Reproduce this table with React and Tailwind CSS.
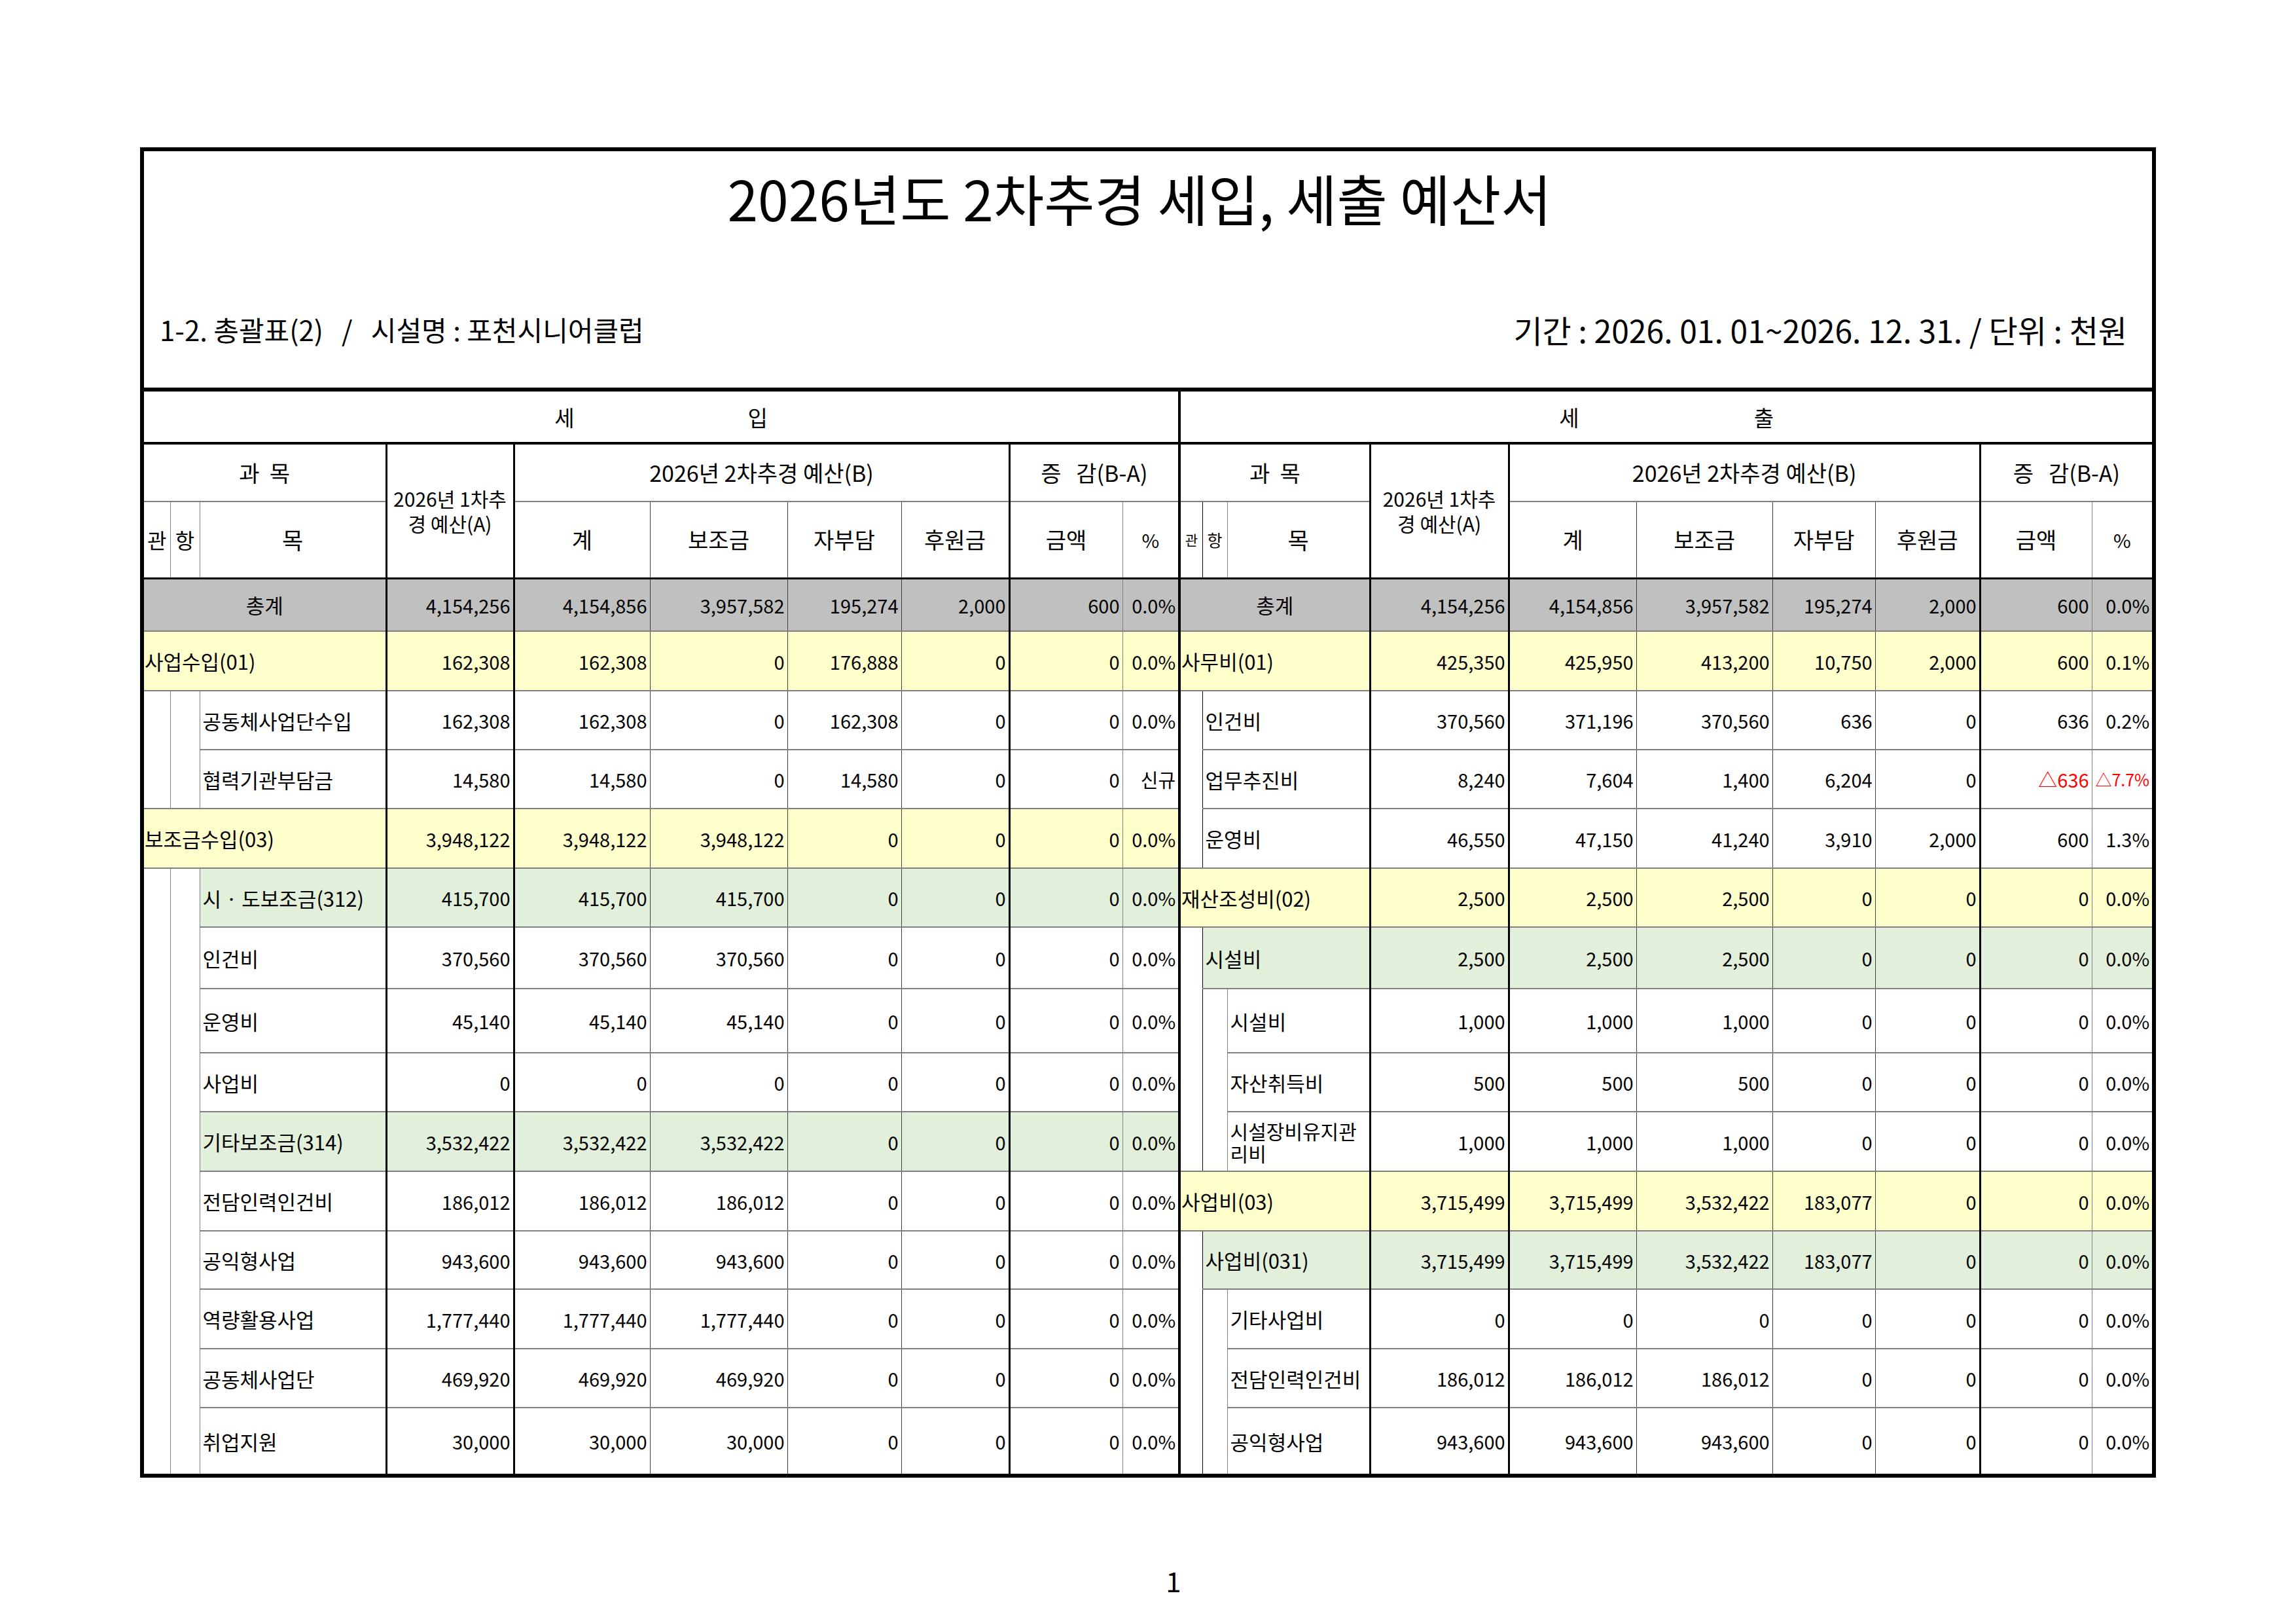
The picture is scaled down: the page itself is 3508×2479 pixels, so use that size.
import React from "react";

// 2026년도 2차추경 세입, 세출 예산서 (총괄표 2)

const FONT = "font-['Noto_Sans_CJK_KR','Noto_Sans',sans-serif]";

const ROW_H = [
  "h-[81px]", "h-[91px]", "h-[90px]", "h-[90px]", "h-[91px]",
  "h-[90px]", "h-[94px]", "h-[98px]", "h-[90px]", "h-[91px]",
  "h-[91px]", "h-[89px]", "h-[91px]", "h-[90px]", "h-[101px]",
];

const GRAY = "bg-[#c0c0c0]";
const YEL = "bg-[#ffffcc]";
const GRN = "bg-[#e2efda]";

const LAST = 14;
const bottomOf = (end) => (end === LAST ? "" : "border-b-2 border-b-[#808080]");

// 숫자 열 오른쪽 테두리 (1차, 계, 보조금, 자부담, 후원금, 금액, %)
const NUM_R = [
  "border-r-[3px] border-r-black",
  "border-r border-r-[#404040]",
  "border-r border-r-[#404040]",
  "border-r border-r-[#404040]",
  "border-r-[3px] border-r-black",
  "border-r border-r-[#808080]",
];

const sideL = [
  { bg: GRAY, l: { kind: "total" }, n: ["4,154,256", "4,154,856", "3,957,582", "195,274", "2,000", "600", "0.0%"] },
  { bg: YEL, l: { kind: "top", text: "사업수입(01)" }, n: ["162,308", "162,308", "0", "176,888", "0", "0", "0.0%"] },
  { bg: "", l: { kind: "mok", text: "공동체사업단수입", gwan: 2, hang: 2 }, n: ["162,308", "162,308", "0", "162,308", "0", "0", "0.0%"] },
  { bg: "", l: { kind: "mok", text: "협력기관부담금" }, n: ["14,580", "14,580", "0", "14,580", "0", "0", "신규"] },
  { bg: YEL, l: { kind: "top", text: "보조금수입(03)" }, n: ["3,948,122", "3,948,122", "3,948,122", "0", "0", "0", "0.0%"] },
  { bg: GRN, l: { kind: "mok", text: "시 · 도보조금(312)", gwan: 10, hang: 10 }, n: ["415,700", "415,700", "415,700", "0", "0", "0", "0.0%"] },
  { bg: "", l: { kind: "mok", text: "인건비" }, n: ["370,560", "370,560", "370,560", "0", "0", "0", "0.0%"] },
  { bg: "", l: { kind: "mok", text: "운영비" }, n: ["45,140", "45,140", "45,140", "0", "0", "0", "0.0%"] },
  { bg: "", l: { kind: "mok", text: "사업비" }, n: ["0", "0", "0", "0", "0", "0", "0.0%"] },
  { bg: GRN, l: { kind: "mok", text: "기타보조금(314)" }, n: ["3,532,422", "3,532,422", "3,532,422", "0", "0", "0", "0.0%"] },
  { bg: "", l: { kind: "mok", text: "전담인력인건비" }, n: ["186,012", "186,012", "186,012", "0", "0", "0", "0.0%"] },
  { bg: "", l: { kind: "mok", text: "공익형사업" }, n: ["943,600", "943,600", "943,600", "0", "0", "0", "0.0%"] },
  { bg: "", l: { kind: "mok", text: "역량활용사업" }, n: ["1,777,440", "1,777,440", "1,777,440", "0", "0", "0", "0.0%"] },
  { bg: "", l: { kind: "mok", text: "공동체사업단" }, n: ["469,920", "469,920", "469,920", "0", "0", "0", "0.0%"] },
  { bg: "", l: { kind: "mok", text: "취업지원" }, n: ["30,000", "30,000", "30,000", "0", "0", "0", "0.0%"] },
];

const sideR = [
  { bg: GRAY, l: { kind: "total" }, n: ["4,154,256", "4,154,856", "3,957,582", "195,274", "2,000", "600", "0.0%"] },
  { bg: YEL, l: { kind: "top", text: "사무비(01)" }, n: ["425,350", "425,950", "413,200", "10,750", "2,000", "600", "0.1%"] },
  { bg: "", l: { kind: "hm", text: "인건비", gwan: 3 }, n: ["370,560", "371,196", "370,560", "636", "0", "636", "0.2%"] },
  { bg: "", l: { kind: "hm", text: "업무추진비" }, n: ["8,240", "7,604", "1,400", "6,204", "0", { v: "△636", red: true }, { v: "△7.7%", red: true, small: true }] },
  { bg: "", l: { kind: "hm", text: "운영비" }, n: ["46,550", "47,150", "41,240", "3,910", "2,000", "600", "1.3%"] },
  { bg: YEL, l: { kind: "top", text: "재산조성비(02)" }, n: ["2,500", "2,500", "2,500", "0", "0", "0", "0.0%"] },
  { bg: GRN, l: { kind: "hm", text: "시설비", gwan: 4 }, n: ["2,500", "2,500", "2,500", "0", "0", "0", "0.0%"] },
  { bg: "", l: { kind: "mok", text: "시설비", hang: 3 }, n: ["1,000", "1,000", "1,000", "0", "0", "0", "0.0%"] },
  { bg: "", l: { kind: "mok", text: "자산취득비" }, n: ["500", "500", "500", "0", "0", "0", "0.0%"] },
  { bg: "", l: { kind: "mok", text: ["시설장비유지관", "리비"] }, n: ["1,000", "1,000", "1,000", "0", "0", "0", "0.0%"] },
  { bg: YEL, l: { kind: "top", text: "사업비(03)" }, n: ["3,715,499", "3,715,499", "3,532,422", "183,077", "0", "0", "0.0%"] },
  { bg: GRN, l: { kind: "hm", text: "사업비(031)", gwan: 4 }, n: ["3,715,499", "3,715,499", "3,532,422", "183,077", "0", "0", "0.0%"] },
  { bg: "", l: { kind: "mok", text: "기타사업비", hang: 3 }, n: ["0", "0", "0", "0", "0", "0", "0.0%"] },
  { bg: "", l: { kind: "mok", text: "전담인력인건비" }, n: ["186,012", "186,012", "186,012", "0", "0", "0", "0.0%"] },
  { bg: "", l: { kind: "mok", text: "공익형사업" }, n: ["943,600", "943,600", "943,600", "0", "0", "0", "0.0%"] },
];

const gwanR = { L: "border-r border-r-[#808080]", R: "border-r border-r-black" };

function Label({ side, i, row }) {
  const { l, bg } = row;
  const b = bottomOf(i);
  const txt = "text-[31px] leading-[31px] whitespace-nowrap";
  if (l.kind === "total") {
    return (
      <td colSpan={3} className={`${b} border-r-[3px] border-r-black ${bg} ${txt} text-center`}>
        총계
      </td>
    );
  }
  if (l.kind === "top") {
    return (
      <td colSpan={3} className={`${b} border-r-[3px] border-r-black ${bg} ${txt} pl-[1px] text-left`}>
        {l.text}
      </td>
    );
  }
  const cells = [];
  if (l.gwan) {
    cells.push(<td key="g" rowSpan={l.gwan} className={`${bottomOf(i + l.gwan - 1)} ${gwanR[side]}`} />);
  }
  if (l.kind === "hm") {
    cells.push(
      <td key="t" colSpan={2} className={`${b} border-r-[3px] border-r-black ${bg} ${txt} pl-[4px] text-left`}>
        {l.text}
      </td>
    );
    return cells;
  }
  if (l.hang) {
    cells.push(<td key="h" rowSpan={l.hang} className={`${bottomOf(i + l.hang - 1)} border-r border-r-[#808080]`} />);
  }
  cells.push(
    <td key="t" className={`${b} border-r-[3px] border-r-black ${bg} ${txt} pl-[4px] text-left`}>
      {Array.isArray(l.text) ? (
        <div className="flex flex-col text-[30px]">
          <span className="h-[34px] leading-[34px]">{l.text[0]}</span>
          <span className="h-[34px] leading-[34px]">{l.text[1]}</span>
        </div>
      ) : (
        l.text
      )}
    </td>
  );
  return cells;
}

function Nums({ side, i, row }) {
  const b = bottomOf(i);
  return row.n.map((item, k) => {
    const v = typeof item === "string" ? item : item.v;
    const red = typeof item === "object" && item.red;
    const small = typeof item === "object" && item.small;
    const r = k < 6 ? NUM_R[k] : side === "L" ? "border-r-[4px] border-r-black" : "";
    return (
      <td
        key={k}
        className={`${b} ${r} ${row.bg} text-right pr-[4px] leading-[32px] whitespace-nowrap ${
          small ? "text-[25px]" : "text-[29px]"
        } ${red ? "text-[#ff0000]" : ""}`}
      >
        {v}
      </td>
    );
  });
}

function HeaderRows() {
  const h1 = "border-b-2 border-b-[#808080] text-[34px] leading-[36px] text-center whitespace-pre";
  const h2 = "border-b-[3px] border-b-black text-center leading-[36px]";
  const half = (side) => {
    const last = side === "L" ? "border-r-[4px] border-r-black" : "";
    return (
      <>
        <td colSpan={3} className={`${h1} border-r-[3px] border-r-black`}>과  목</td>
        <td rowSpan={2} className="border-b-[3px] border-b-black border-r-[3px] border-r-black text-center text-[30px] leading-[38px] whitespace-nowrap">
          2026년 1차추
          <br />
          경 예산(A)
        </td>
        <td colSpan={4} className={`${h1} border-r-[3px] border-r-black`}>2026년 2차추경 예산(B)</td>
        <td colSpan={2} className={`${h1} ${last}`}>증   감(B-A)</td>
      </>
    );
  };
  const sub = (side) => {
    const last = side === "L" ? "border-r-[4px] border-r-black" : "";
    return (
      <>
        <td className={`${h2} ${side === "L" ? "text-[32px]" : "text-[21px]"} ${gwanR[side]}`}>관</td>
        <td className={`${h2} ${side === "L" ? "text-[32px]" : "text-[25px]"} border-r border-r-[#808080]`}>항</td>
        <td className={`${h2} text-[35px] border-r-[3px] border-r-black`}>목</td>
        <td className={`${h2} text-[34px] border-r border-r-[#404040]`}>계</td>
        <td className={`${h2} text-[34px] border-r border-r-[#404040]`}>보조금</td>
        <td className={`${h2} text-[34px] border-r border-r-[#404040]`}>자부담</td>
        <td className={`${h2} text-[34px] border-r-[3px] border-r-black`}>후원금</td>
        <td className={`${h2} text-[34px] border-r border-r-[#808080]`}>금액</td>
        <td className={`${h2} text-[29px] ${last}`}>%</td>
      </>
    );
  };
  return (
    <>
      <tr className="h-[79px]">
        <td colSpan={10} className="border-b-[4px] border-b-black border-r-[4px] border-r-black">
          <div className="flex justify-center gap-[265px] text-[33px] leading-[36px]">
            <span>세</span>
            <span>입</span>
          </div>
        </td>
        <td colSpan={10} className="border-b-[4px] border-b-black">
          <div className="flex justify-center gap-[267px] text-[33px] leading-[36px]">
            <span>세</span>
            <span>출</span>
          </div>
        </td>
      </tr>
      <tr className="h-[89px]">
        {half("L")}
        {half("R")}
      </tr>
      <tr className="h-[117px]">
        {sub("L")}
        {sub("R")}
      </tr>
    </>
  );
}

const COLS = [
  "w-[40px]", "w-[45px]", "w-[285px]", "w-[195px]", "w-[208px]", "w-[210px]", "w-[174px]", "w-[165px]", "w-[173px]", "w-[87px]",
  "w-[35px]", "w-[38px]", "w-[218px]", "w-[212px]", "w-[195px]", "w-[208px]", "w-[157px]", "w-[160px]", "w-[171px]", "w-[92px]",
];

export default function App() {
  return (
    <div className={`min-h-[2479px] bg-white text-black pt-[225px] ${FONT}`}>
      <div className="w-[3080px] mx-auto border-[6px] border-black">
        {/* 제목 */}
        <div className="h-[367px] border-b-[6px] border-black flex flex-col">
          <div className="h-[142px] flex items-center justify-center pr-[26px] text-[84px] leading-none">
            2026년도 2차추경 세입, 세출 예산서
          </div>
          <div className="mt-[100px] h-[60px] flex items-center justify-between pl-[24px] pr-[38px]">
            <div className="text-[42px] leading-none whitespace-pre">1-2. 총괄표(2)   /   시설명 : 포천시니어클럽</div>
            <div className="text-[48px] leading-none whitespace-pre">기간 : 2026. 01. 01~2026. 12. 31. / 단위 : 천원</div>
          </div>
        </div>

        {/* 총괄표 */}
        <table className="w-full table-fixed border-collapse">
          <colgroup>
            {COLS.map((c, k) => (
              <col key={k} className={c} />
            ))}
          </colgroup>
          <tbody>
            <HeaderRows />
            {sideL.map((row, i) => (
              <tr key={i} className={ROW_H[i]}>
                <Label side="L" i={i} row={row} />
                <Nums side="L" i={i} row={row} />
                <Label side="R" i={i} row={sideR[i]} />
                <Nums side="R" i={i} row={sideR[i]} />
              </tr>
            ))}
          </tbody>
        </table>
      </div>
      <div className="w-[3080px] mx-auto mt-[136px] pl-[78px] text-center text-[42px] leading-[42px]">1</div>
    </div>
  );
}
